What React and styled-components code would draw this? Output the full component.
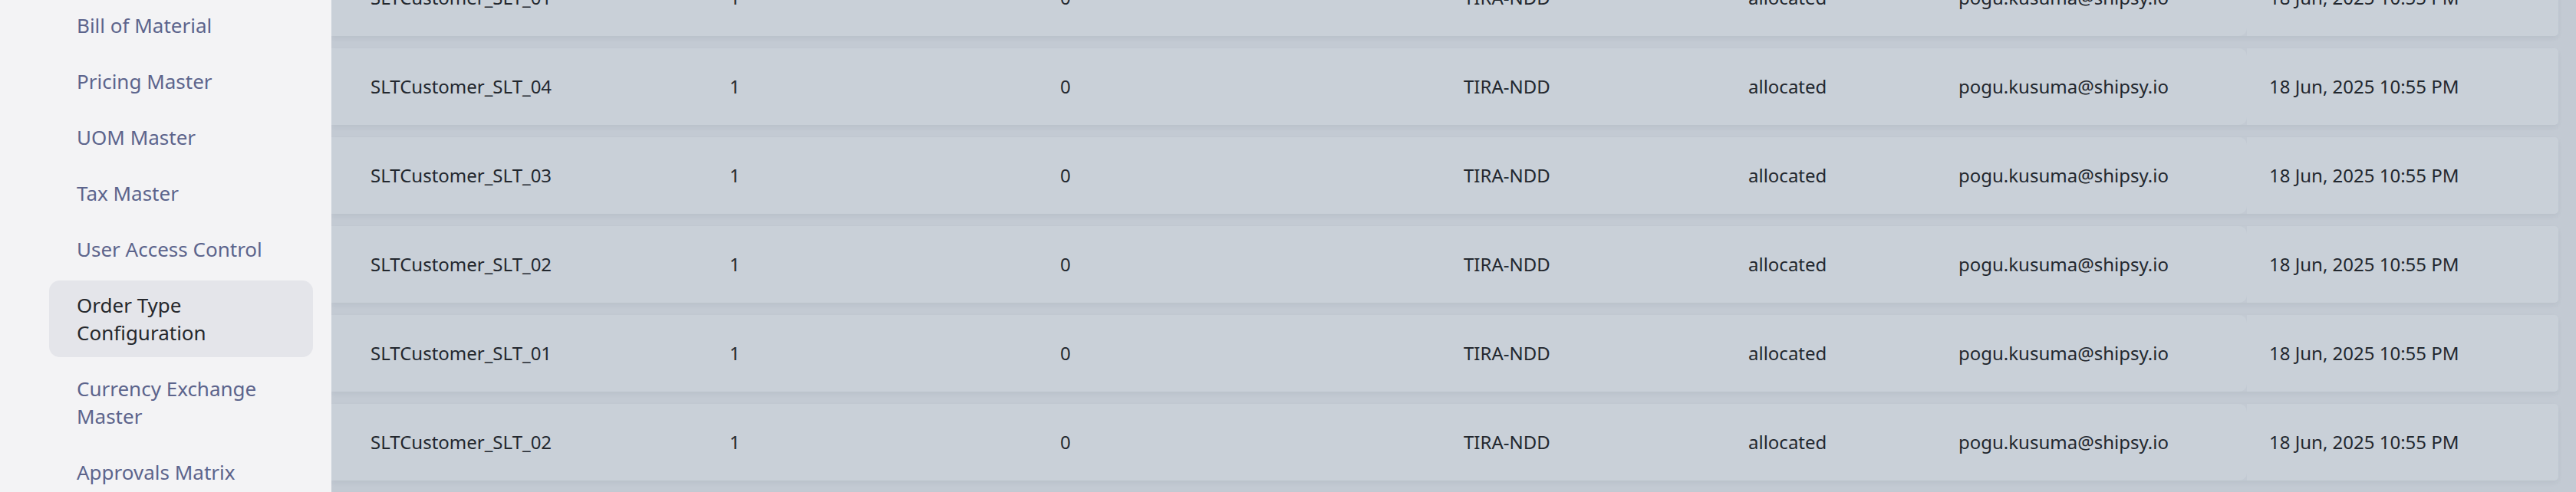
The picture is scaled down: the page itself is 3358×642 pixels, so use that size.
import React from "react";
import styled, { createGlobalStyle } from "styled-components";

const GlobalStyle = createGlobalStyle`
  html, body {
    margin: 0;
    padding: 0;
    background: #c3cad3;
  }
  * {
    box-sizing: border-box;
  }
  body {
    font-family: "Noto Sans", "Open Sans", "Liberation Sans", sans-serif;
  }
`;

const menuItems = [
  "Bill of Material",
  "Pricing Master",
  "UOM Master",
  "Tax Master",
  "User Access Control",
  "Order Type Configuration",
  "Currency Exchange Master",
  "Approvals Matrix",
  "Service Types",
];

const rows = [
  "SLTCustomer_SLT_01",
  "SLTCustomer_SLT_04",
  "SLTCustomer_SLT_03",
  "SLTCustomer_SLT_02",
  "SLTCustomer_SLT_01",
  "SLTCustomer_SLT_02",
  "SLTCustomer_SLT_03",
];

export default function App() {
  return (
    <>
      <GlobalStyle />
      <Layout>
        <Sidebar>
          <Menu>
            {menuItems.map((label) => (
              <MenuItem key={label} $active={label === "Order Type Configuration"}>
                {label}
              </MenuItem>
            ))}
          </Menu>
        </Sidebar>
        <Content>
          <RowList>
            {rows.map((code, i) => (
              <Row key={i}>
                <MainCells>
                  <Cell>{code}</Cell>
                  <Cell>1</Cell>
                  <Cell>0</Cell>
                  <Cell>TIRA-NDD</Cell>
                  <Cell>allocated</Cell>
                  <Cell>pogu.kusuma@shipsy.io</Cell>
                </MainCells>
                <StickyCell>18 Jun, 2025 10:55 PM</StickyCell>
              </Row>
            ))}
          </RowList>
        </Content>
      </Layout>
    </>
  );
}

const Layout = styled.div`
  display: flex;
  width: 3358px;
  height: 642px;
  overflow: hidden;
`;

const Sidebar = styled.aside`
  flex: 0 0 432px;
  background: #f3f3f5;
  padding: 1px 24px 0 64px;
  overflow: hidden;
`;

const Menu = styled.nav`
  display: flex;
  flex-direction: column;
  gap: 9px;
`;

const MenuItem = styled.div`
  padding: 14px 36px;
  border-radius: 14px;
  font-size: 26px;
  line-height: 36px;
  color: ${(p) => (p.$active ? "#26282c" : "#5c648c")};
  background: ${(p) => (p.$active ? "#e4e5ea" : "transparent")};
`;

const Content = styled.main`
  flex: 1;
  background: #c3cad3;
  padding-right: 23px;
  overflow: hidden;
`;

const RowList = styled.div`
  display: flex;
  flex-direction: column;
  gap: 16px;
  margin-top: -53px;
`;

const Row = styled.div`
  display: flex;
  height: 100px;
  box-shadow: 0 3px 6px rgba(40, 50, 70, 0.06);
  border-radius: 0 6px 6px 0;
`;

const MainCells = styled.div`
  flex: 0 0 2497px;
  display: grid;
  grid-template-columns: 468px 431px 526px 371px 274px 376px;
  align-items: center;
  padding-left: 51px;
  background: #c9d0d8;
  border-radius: 0 10px 10px 0;
`;

const Cell = styled.div`
  font-size: 24px;
  line-height: 32px;
  color: #22272e;
  white-space: nowrap;
`;

const StickyCell = styled.div`
  flex: 1;
  display: flex;
  align-items: center;
  padding-left: 29px;
  background: #c9d0d8;
  border-radius: 0 5px 5px 0;
  font-size: 24px;
  line-height: 32px;
  color: #22272e;
  white-space: nowrap;
`;
